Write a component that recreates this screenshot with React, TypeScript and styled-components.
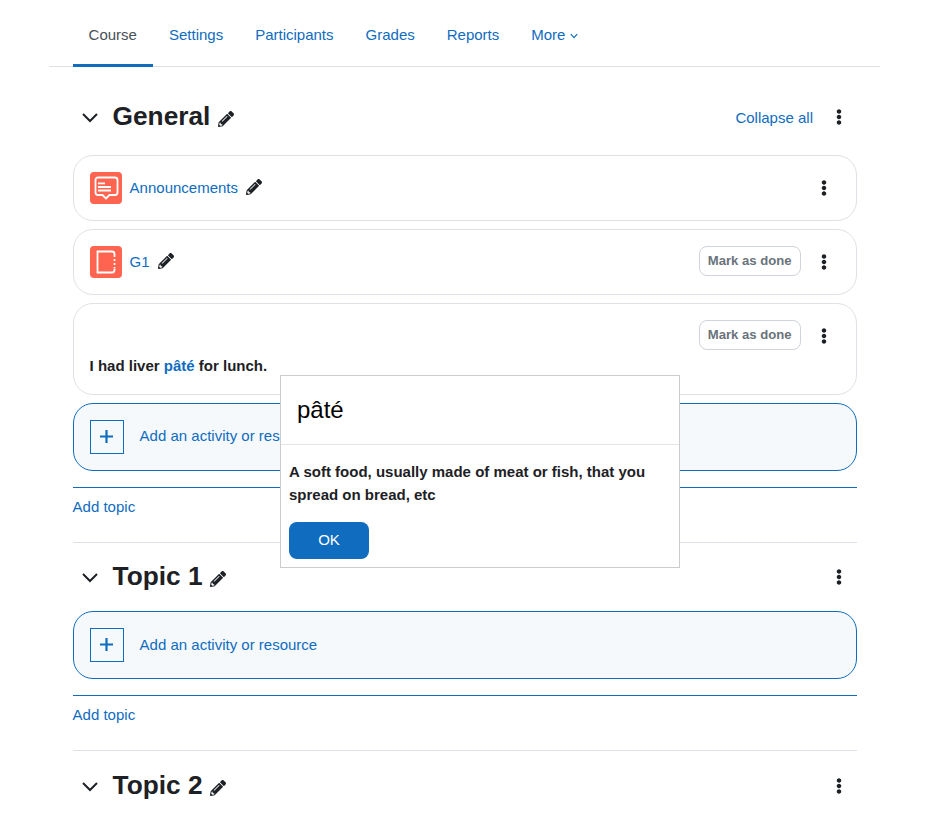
import React from 'react';
import styled, { createGlobalStyle } from 'styled-components';
import { FaPencilAlt, FaEllipsisV } from 'react-icons/fa';

const GlobalStyle = createGlobalStyle`
  html, body {
    margin: 0;
    height: 815px;
    overflow: hidden;
    background: #fff;
    font-family: "Liberation Sans", Arial, sans-serif;
    font-size: 15px;
    line-height: 1.5;
    color: #1d2125;
  }
`;

const Page = styled.div`
  position: relative;
  width: 948px;
  height: 815px;
  overflow: hidden;
`;

const NavBar = styled.nav`
  margin: 0 68px 0 49px;
  padding: 0 24px 0 23.6px;
  height: 67px;
  box-sizing: border-box;
  display: flex;
  border-bottom: 1px solid #dee2e6;
`;

const Tab = styled.a<{ $active?: boolean }>`
  display: flex;
  align-items: center;
  gap: 5px;
  height: 67px;
  box-sizing: border-box;
  padding: 7px 16px 0;
  color: ${p => (p.$active ? '#495057' : '#0f6cbf')};
  border-bottom: 3px solid ${p => (p.$active ? '#0f6cbf' : 'transparent')};
`;

const Content = styled.main`
  margin-left: 72.6px;
  width: 784.4px;
`;

const Section = styled.section<{ $first?: boolean }>`
  padding-top: ${p => (p.$first ? '16px' : '0')};
  padding-bottom: ${p => (p.$first ? '0' : '0.6px')};
  & + & {
    border-top: 1px solid #dee2e6;
  }
`;

const SectionHeader = styled.header<{ $first?: boolean }>`
  display: flex;
  align-items: center;
  height: ${p => (p.$first ? '68px' : '68.4px')};
  margin-bottom: ${p => (p.$first ? '4px' : '0')};
`;

const Chevron = styled.svg`
  width: 18px;
  height: 18px;
  margin-left: 8.4px;
  margin-right: 13.6px;
  color: #1d2125;
`;

const SectionTitle = styled.h3`
  margin: 0;
  font-size: 26.25px;
  line-height: 1.2;
  font-weight: 700;
`;

const TitlePencil = styled.span`
  display: inline-flex;
  margin-left: 7.4px;
  margin-top: 4px;
  font-size: 16px;
  color: #1d2125;
`;

const HeaderActions = styled.div`
  margin-left: auto;
  display: flex;
  align-items: center;
  gap: 18px;
  padding-right: 10px;
`;

const TextLink = styled.a`
  color: #0f6cbf;
`;

const CollapseLink = styled(TextLink)`
  margin-top: 2px;
`;

const Kebab = styled.span`
  display: inline-flex;
  align-items: center;
  justify-content: center;
  width: 16px;
  height: 16px;
  font-size: 16px;
  color: #1d2125;
`;

const ActivityList = styled.div`
  display: flex;
  flex-direction: column;
  gap: 8px;
`;

const Card = styled.div`
  box-sizing: border-box;
  border: 1px solid #dee2e6;
  border-radius: 20px;
  padding: 16px;
`;

const ActivityRow = styled.div`
  display: flex;
  align-items: center;
  min-height: 32px;
`;

const ModIcon = styled.span`
  display: flex;
  width: 32px;
  height: 32px;
  border-radius: 4px;
  background: #ff6450;
  margin-right: 8px;
`;

const ActivityName = styled.a`
  color: #0f6cbf;
`;

const NamePencil = styled.span`
  display: inline-flex;
  margin-left: 8px;
  margin-bottom: 2px;
  font-size: 16px;
  color: #1d2125;
`;

const RowActions = styled.div`
  margin-left: auto;
  display: flex;
  align-items: center;
  gap: 15.4px;
  padding-right: 8px;
`;

const DoneButton = styled.span`
  box-sizing: border-box;
  height: 30px;
  margin-bottom: 2px;
  display: flex;
  align-items: center;
  padding: 0 8px;
  border: 1px solid #ced4da;
  border-radius: 8px;
  font-size: 13.125px;
  font-weight: 700;
  color: #6a737b;
`;

const LabelText = styled.p`
  margin: 3px 0 0;
  font-weight: 700;
  a {
    color: #0f6cbf;
  }
`;

const AddActivity = styled.div`
  display: flex;
  align-items: center;
  gap: 16px;
  box-sizing: border-box;
  height: 68px;
  padding: 0 16px;
  border: 1px solid #0f6cbf;
  border-radius: 20px;
  background: #f5f9fc;
  color: #0f6cbf;
`;

const PlusBox = styled.span`
  display: flex;
  align-items: center;
  justify-content: center;
  box-sizing: border-box;
  width: 34px;
  height: 34px;
  border: 1px solid #0f6cbf;
`;

const AddTopic = styled.div`
  margin-top: 16px;
  padding-top: 8px;
  height: 55px;
  box-sizing: border-box;
  border-top: 1px solid #0f6cbf;
`;

const Dialog = styled.div`
  position: absolute;
  left: 280px;
  top: 375px;
  width: 400px;
  height: 193px;
  box-sizing: border-box;
  background: #fff;
  border: 1px solid #ccc;
`;

const DialogTitle = styled.h2`
  margin: 0;
  height: 69px;
  box-sizing: border-box;
  padding: 0 16px;
  display: flex;
  align-items: center;
  font-size: 24px;
  font-weight: 400;
  color: #000;
  border-bottom: 1px solid #e5e5e5;
`;

const DialogBody = styled.div`
  padding: 15px 8px 0;
  font-weight: 700;
`;

const DialogText = styled.p`
  margin: 0 0 16px;
  line-height: 23px;
`;

const OkButton = styled.button`
  display: block;
  width: 80px;
  height: 37px;
  padding: 0 0 2px;
  border: 0;
  border-radius: 8px;
  background: #0f6cbf;
  color: #fff;
  font: 400 15px "Liberation Sans", Arial, sans-serif;
`;

const ChevronDown = () => (
  <Chevron viewBox="0 0 18 18" fill="none" stroke="currentColor" strokeWidth="2">
    <path d="M2 6l7 7 7-7" />
  </Chevron>
);

const Dots = () => (
  <Kebab>
    <FaEllipsisV />
  </Kebab>
);

const AnnouncementIcon = () => (
  <svg width="32" height="32" viewBox="0 0 32 32" fill="none" stroke="#fff" strokeWidth="1.8">
    <path d="M8 5.500h17a2.500 2.500 0 0 1 2.500 2.500v12.500a2.500 2.500 0 0 1-2.500 2.500h-5.500l-3.500 3.500-3.500-3.500H8a2.500 2.500 0 0 1-2.500-2.500V8A2.500 2.500 0 0 1 8 5.500z" />
    <path d="M8 11.300h7M8 15h13M8 18.500h13" />
  </svg>
);

const BookIcon = () => (
  <svg width="32" height="32" viewBox="0 0 32 32" fill="none" stroke="#fff" strokeWidth="1.8">
    <path d="M24.500 11V8a2.500 2.500 0 0 0-2.500-2.500H7.500v21H22a2.500 2.500 0 0 0 2.500-2.500v-1" />
    <path d="M24.500 13v2M24.500 17v2M24.500 21v1.500" />
  </svg>
);

const AddBlock = () => (
  <AddActivity>
    <PlusBox>
      <svg width="13" height="13" viewBox="0 0 13 13" stroke="#0f6cbf" strokeWidth="2.2">
        <path d="M6.500 0v13M0 6.500h13" />
      </svg>
    </PlusBox>
    Add an activity or resource
  </AddActivity>
);

export default function App() {
  return (
    <Page>
      <GlobalStyle />
      <NavBar>
        <Tab $active>Course</Tab>
        <Tab>Settings</Tab>
        <Tab>Participants</Tab>
        <Tab>Grades</Tab>
        <Tab>Reports</Tab>
        <Tab>
          More
          <svg width="8" height="8" viewBox="0 0 8 8" fill="none" stroke="currentColor" strokeWidth="1.200">
            <path d="M0.800 2.200L4 5.600l3.200-3.400" />
          </svg>
        </Tab>
      </NavBar>
      <Content>
        <Section $first>
          <SectionHeader $first>
            <ChevronDown />
            <SectionTitle>General</SectionTitle>
            <TitlePencil><FaPencilAlt /></TitlePencil>
            <HeaderActions>
              <CollapseLink>Collapse all</CollapseLink>
              <Dots />
            </HeaderActions>
          </SectionHeader>
          <ActivityList>
            <Card>
              <ActivityRow>
                <ModIcon><AnnouncementIcon /></ModIcon>
                <ActivityName>Announcements</ActivityName>
                <NamePencil><FaPencilAlt /></NamePencil>
                <RowActions><Dots /></RowActions>
              </ActivityRow>
            </Card>
            <Card>
              <ActivityRow>
                <ModIcon><BookIcon /></ModIcon>
                <ActivityName>G1</ActivityName>
                <NamePencil><FaPencilAlt /></NamePencil>
                <RowActions>
                  <DoneButton>Mark as done</DoneButton>
                  <Dots />
                </RowActions>
              </ActivityRow>
            </Card>
            <Card>
              <ActivityRow>
                <RowActions>
                  <DoneButton>Mark as done</DoneButton>
                  <Dots />
                </RowActions>
              </ActivityRow>
              <LabelText>I had liver <a>pâté</a> for lunch.</LabelText>
            </Card>
            <AddBlock />
          </ActivityList>
          <AddTopic><TextLink>Add topic</TextLink></AddTopic>
        </Section>
        <Section>
          <SectionHeader>
            <ChevronDown />
            <SectionTitle>Topic 1</SectionTitle>
            <TitlePencil><FaPencilAlt /></TitlePencil>
            <HeaderActions><Dots /></HeaderActions>
          </SectionHeader>
          <AddBlock />
          <AddTopic><TextLink>Add topic</TextLink></AddTopic>
        </Section>
        <Section>
          <SectionHeader>
            <ChevronDown />
            <SectionTitle>Topic 2</SectionTitle>
            <TitlePencil><FaPencilAlt /></TitlePencil>
            <HeaderActions><Dots /></HeaderActions>
          </SectionHeader>
        </Section>
      </Content>
      <Dialog>
        <DialogTitle>pâté</DialogTitle>
        <DialogBody>
          <DialogText>A soft food, usually made of meat or fish, that you spread on bread, etc</DialogText>
          <OkButton>OK</OkButton>
        </DialogBody>
      </Dialog>
    </Page>
  );
}
